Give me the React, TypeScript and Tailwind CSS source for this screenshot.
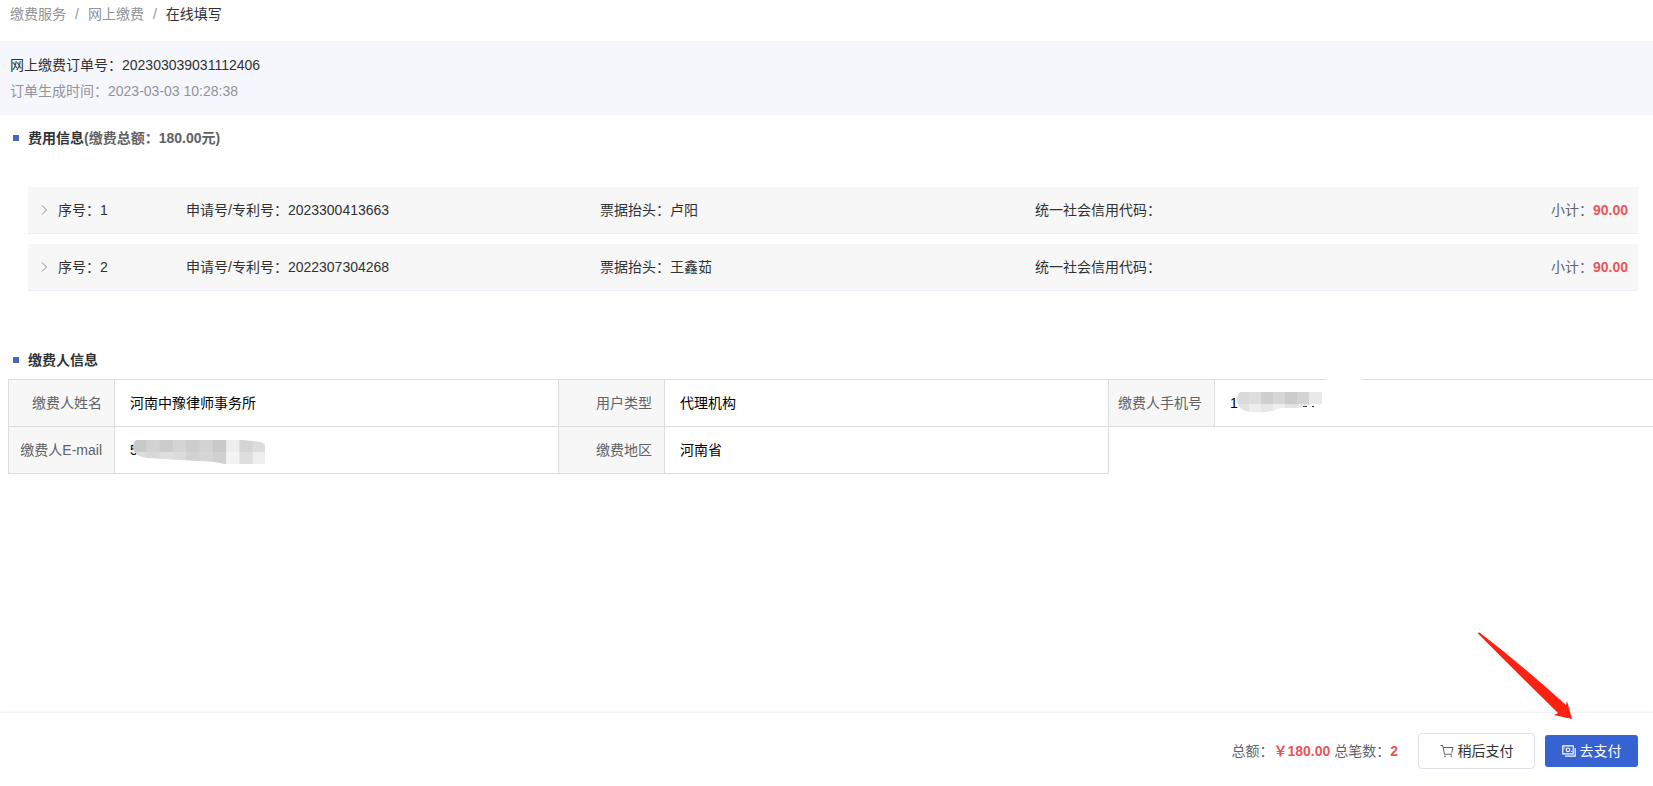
import { ReactNode } from "react";

type FeeItem = {
  index: number;
  applicationNo: string;
  invoiceTitle: string;
  creditCode: string;
  subtotal: string;
};

const feeItems: FeeItem[] = [
  {
    index: 1,
    applicationNo: "2023300413663",
    invoiceTitle: "卢阳",
    creditCode: "",
    subtotal: "90.00",
  },
  {
    index: 2,
    applicationNo: "2022307304268",
    invoiceTitle: "王鑫茹",
    creditCode: "",
    subtotal: "90.00",
  },
];

function SectionTitle({ children }: { children: ReactNode }) {
  return (
    <h2 className="flex items-center gap-[9px] pl-[13px] leading-5 font-bold text-[#303133]">
      <span className="h-1.5 w-1.5 bg-[#4468c8]" />
      <span>{children}</span>
    </h2>
  );
}

function FeeRow({ item }: { item: FeeItem }) {
  return (
    <button
      type="button"
      aria-expanded="false"
      className="flex h-[47px] w-full items-center border-b border-[#ebeef5] bg-[#f7f7f7] px-2.5 text-left text-[#303133]"
    >
      <svg
        className="mr-1.5 h-3.5 w-3.5"
        viewBox="0 0 14 14"
        fill="none"
        stroke="#85888f"
      >
        <path d="M4 2.5L8.5 7L4 11.5" />
      </svg>
      <span className="grid flex-1 grid-cols-[128fr_414fr_435fr_593fr]">
        <span>序号：{item.index}</span>
        <span>申请号/专利号：{item.applicationNo}</span>
        <span>票据抬头：{item.invoiceTitle}</span>
        <span className="flex justify-between">
          <span>统一社会信用代码：{item.creditCode}</span>
          <span className="text-[#606266]">
            小计：<b className="text-[#e9565a]">{item.subtotal}</b>
          </span>
        </span>
      </span>
    </button>
  );
}

function LabelCell({ children }: { children: ReactNode }) {
  return (
    <th
      scope="row"
      className="h-[47px] border border-[#dcdddf] bg-[#f7f7f7] pr-3 text-right font-normal whitespace-nowrap text-[#606266]"
    >
      {children}
    </th>
  );
}

function ValueCell({ children }: { children: ReactNode }) {
  return (
    <td className="relative border border-[#dcdddf] px-[15px] text-black">
      {children}
    </td>
  );
}

function CartIcon() {
  return (
    <svg
      className="h-3.5 w-3.5"
      viewBox="0 0 14 14"
      fill="none"
      stroke="#606266"
    >
      <path d="M.5 1.5h2.2l1.8 8.8h7.5M3.2 3.5h9.8l-1.2 5.3" />
      <circle cx="5" cy="12.3" r=".5" />
      <circle cx="11.3" cy="12.3" r=".5" />
    </svg>
  );
}

function PayIcon() {
  return (
    <svg
      className="h-3.5 w-3.5"
      viewBox="0 0 14 14"
      fill="none"
      stroke="#fff"
      strokeWidth="1.2"
    >
      <path d="M.8 1.8h10.4v8H.8zM3 12.2h10.2V4" />
      <circle cx="6" cy="5.8" r="1.8" />
      <path d="M2.5 3.5v1M9.5 7v1" />
    </svg>
  );
}

// Shades of the mosaic tiles, one list per row
const phoneTiles = [
  ["#dadada", "#dedede", "#cfcfcf", "#d6d6d6", "#cccccc", "#d4d4d4", "#e9e9e9"],
  ["#e2e2e2", "#eeeeee", "#e6e6e6", "#eeeeee", "#e2e2e2", "#e6e6e6", "#eeeeee"],
];

const emailTiles = [
  ["#c9c9c9", "#d2d2d2", "#cccccc", "#d4d4d4", "#cdcdcd", "#d3d3d3", "#c9c9c9", "#eeeeee", "#d4d4d4", "#dcdcdc"],
  ["#dddddd", "#d8d8d8", "#e0e0e0", "#dbdbdb", "#d2d2d2", "#d6d6d6", "#d0d0d0", "#f3f3f3", "#dedede", "#efefef"],
];

function Tiles({ rows, size }: { rows: string[][]; size: number }) {
  return (
    <>
      {rows.map((row, y) =>
        row.map((fill, x) => (
          <rect
            key={`${x}-${y}`}
            x={x * size}
            y={y * 12}
            width={size + 1}
            height="12"
            fill={fill}
          />
        ))
      )}
    </>
  );
}

function PhoneMask() {
  return (
    <>
      <svg
        className="absolute top-3 left-[22px] h-[22px] w-[86px]"
        viewBox="0 0 86 22"
      >
        <clipPath id="phone-mask">
          <path d="M3 0H85V12H74Q66 16 58 16Q44 15 38 18Q30 21 14 20Q2 19 0 10Q0 3 3 0Z" />
        </clipPath>
        <g clipPath="url(#phone-mask)">
          <Tiles rows={phoneTiles} size={12} />
        </g>
        <path d="M66 14.5h4M75 14.5h2" stroke="#3c3c3c" />
      </svg>
      <span className="absolute -top-0.5 left-[111px] h-1 w-9 rounded-full bg-white" />
    </>
  );
}

function EmailMask() {
  return (
    <svg
      className="absolute top-[13px] left-[18px] h-6 w-[133px]"
      viewBox="0 0 133 24"
    >
      <clipPath id="email-mask">
        <path d="M3 0H110L128 2Q132 3 132 6V24H92Q80 21 64 21L14 18Q2 17 0 8Q0 2 3 0Z" />
      </clipPath>
      <g clipPath="url(#email-mask)">
        <Tiles rows={emailTiles} size={13.3} />
      </g>
    </svg>
  );
}

function Arrow() {
  return (
    <svg
      className="pointer-events-none absolute right-20 bottom-[65px] h-[90px] w-[96px]"
      viewBox="0 0 96 90"
      fill="#fb2214"
    >
      <path d="M1 2.5Q1 1 2.5 1.5Q45 34 89 74L90 70L95 88L77 84L81 82Q40 42 1 2.5Z" />
    </svg>
  );
}

export default function App() {
  return (
    <div className="flex min-h-screen flex-col overflow-x-hidden bg-white font-['Liberation_Sans','Noto_Sans_CJK_SC',sans-serif] text-sm">
      <nav className="flex h-[41px] gap-[9px] pt-1 pl-2.5 leading-5 text-[#909399]">
        <a href="#service">缴费服务</a>
        <span>/</span>
        <a href="#online">网上缴费</a>
        <span>/</span>
        <span className="text-[#303133]">在线填写</span>
      </nav>

      <header className="bg-[#f5f7fc] px-2.5 py-[11px] leading-[26px]">
        <p className="text-[#303133]">网上缴费订单号：202303039031112406</p>
        <p className="text-[#909399]">订单生成时间：2023-03-03 10:28:38</p>
      </header>

      <main className="flex-1">
        <section className="pt-[13px]">
          <SectionTitle>
            费用信息
            <span className="text-[#606266]">(缴费总额：180.00元)</span>
          </SectionTitle>
          <div className="mt-[39px] mr-[15px] ml-7 flex flex-col gap-2.5">
            {feeItems.map((item) => (
              <FeeRow key={item.index} item={item} />
            ))}
          </div>
        </section>

        <section className="pt-[59px]">
          <SectionTitle>缴费人信息</SectionTitle>
          <table className="mt-[9px] ml-2 w-[calc(100%-2px)] table-fixed border-collapse">
            <colgroup>
              <col className="w-[106px]" />
              <col />
              <col className="w-[106px]" />
              <col />
              <col className="w-[106px]" />
              <col />
            </colgroup>
            <tbody>
              <tr>
                <LabelCell>缴费人姓名</LabelCell>
                <ValueCell>河南中豫律师事务所</ValueCell>
                <LabelCell>用户类型</LabelCell>
                <ValueCell>代理机构</ValueCell>
                <LabelCell>缴费人手机号</LabelCell>
                <ValueCell>
                  1
                  <PhoneMask />
                </ValueCell>
              </tr>
              <tr>
                <LabelCell>缴费人E-mail</LabelCell>
                <ValueCell>
                  5
                  <EmailMask />
                </ValueCell>
                <LabelCell>缴费地区</LabelCell>
                <ValueCell>河南省</ValueCell>
              </tr>
            </tbody>
          </table>
        </section>
      </main>

      <footer className="relative flex h-[74px] items-center justify-end border-t border-[#f2f2f2] pt-0.5 pr-[15px] text-[#606266] shadow-[0_-1px_2px_rgba(0,0,0,0.03)]">
        <p>
          总额：
          <b className="text-[#e9565a]">￥180.00</b> 总笔数：
          <b className="text-[#e9565a]">2</b>
        </p>
        <button
          type="button"
          className="ml-5 flex h-9 w-[117px] items-center justify-center gap-1 rounded border border-[#dcdfe6] bg-white text-[#303133]"
        >
          <CartIcon />
          稍后支付
        </button>
        <button
          type="button"
          className="ml-2.5 flex h-8 w-[93px] items-center justify-center gap-1 rounded-[3px] bg-[#3762d1] text-white"
        >
          <PayIcon />
          去支付
        </button>
        <Arrow />
      </footer>
    </div>
  );
}
